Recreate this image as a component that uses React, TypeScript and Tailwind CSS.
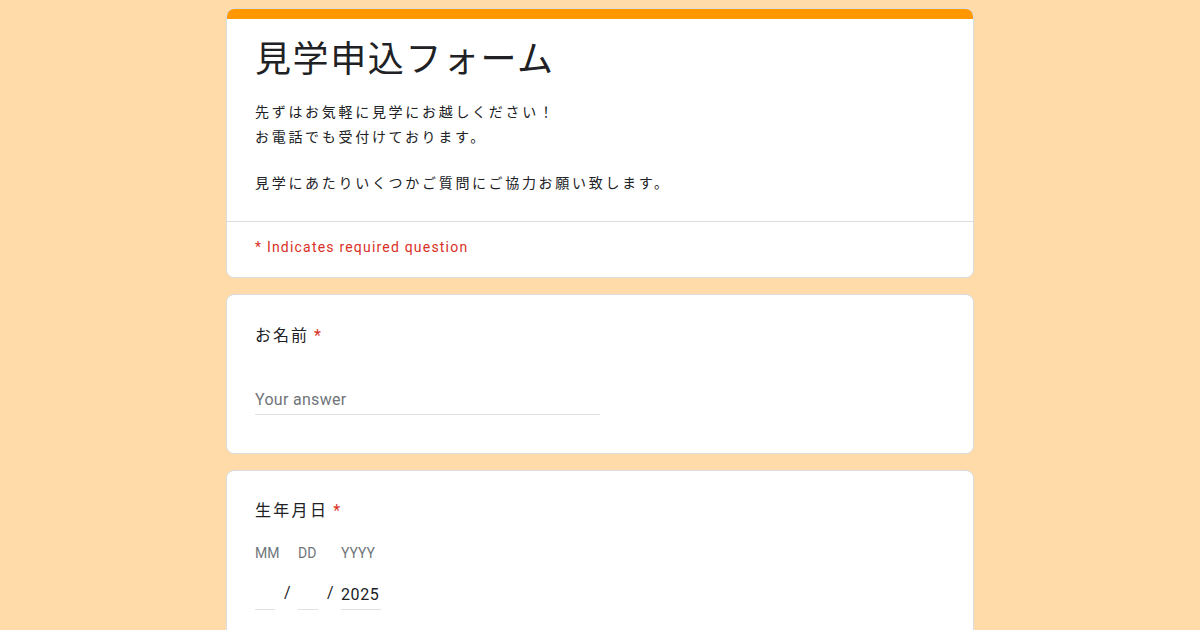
import React from "react";

const font = { fontFamily: 'Roboto, "Noto Sans CJK JP", sans-serif' };

export default function App() {
  return (
    <div className="min-h-[630px] w-full bg-[#fedba8] pt-2" style={font}>
      <div className="mx-auto flex w-[748px] flex-col gap-[16px]">
        {/* Header card */}
        <div className="overflow-hidden rounded-lg border border-[#dadce0] bg-white">
          <div className="h-[10px] bg-[#ff9800]" />
          <div className="px-[28px] pb-[25px] pt-[17px]">
            <h1 className="text-[36px] leading-[48px] tracking-[1.6px] text-[#202124]">見学申込フォーム</h1>
            <div className="mt-[16px] text-[14px] leading-[25px] tracking-[2.7px] text-[#202124]">
              <p>先ずはお気軽に見学にお越しください！</p>
              <p>お電話でも受付けております。</p>
              <p className="h-[21px]" />
              <p>見学にあたりいくつかご質問にご協力お願い致します。</p>
            </div>
          </div>
          <div className="border-t border-[#dadce0] px-[28px] pb-[20px] pt-[15px]">
            <p className="text-[14px] leading-[20px] tracking-[1.2px] text-[#d93025]">* Indicates required question</p>
          </div>
        </div>

        {/* Name card */}
        <div className="rounded-lg border border-[#dadce0] bg-white px-[28px] pb-[38px] pt-[29px]">
          <p className="text-[16px] leading-[24px] tracking-[2px] text-[#202124]">
            お名前<span className="ml-[5px] text-[#d93025]">*</span>
          </p>
          <div className="mt-[40px] w-[345px] border-b border-[#e0e0e0] pb-[2px]">
            <span className="text-[16px] leading-[24px] tracking-[0.3px] text-[#70757a]">Your answer</span>
          </div>
        </div>

        {/* Birthday card */}
        <div className="rounded-lg border border-[#dadce0] bg-white px-[28px] pb-[40px] pt-[28px]">
          <p className="text-[16px] leading-[24px] tracking-[2.3px] text-[#202124]">
            生年月日<span className="ml-[5px] text-[#d93025]">*</span>
          </p>
          <div className="mt-[20px] flex items-end">
            <div className="flex w-[20px] flex-col">
              <span className="whitespace-nowrap text-[14px] leading-[20px] text-[#70757a]">MM</span>
              <div className="mt-[20px] h-[27px] w-[20px] border-b border-[#e0e0e0]" />
            </div>
            <span className="mx-[9px] mb-[6px] w-[5px] text-[16px] leading-[22px] text-[#202124]">/</span>
            <div className="flex w-[20px] flex-col">
              <span className="whitespace-nowrap text-[14px] leading-[20px] text-[#70757a]">DD</span>
              <div className="mt-[20px] h-[27px] w-[20px] border-b border-[#e0e0e0]" />
            </div>
            <span className="mx-[9px] mb-[6px] w-[5px] text-[16px] leading-[22px] text-[#202124]">/</span>
            <div className="flex w-[40px] flex-col">
              <span className="whitespace-nowrap text-[14px] leading-[20px] text-[#70757a]">YYYY</span>
              <div className="mt-[20px] h-[27px] w-[40px] border-b border-[#e0e0e0] text-[16px] leading-[24px] tracking-[0.6px] text-[#202124]">
                2025
              </div>
            </div>
          </div>
        </div>
      </div>
    </div>
  );
}
